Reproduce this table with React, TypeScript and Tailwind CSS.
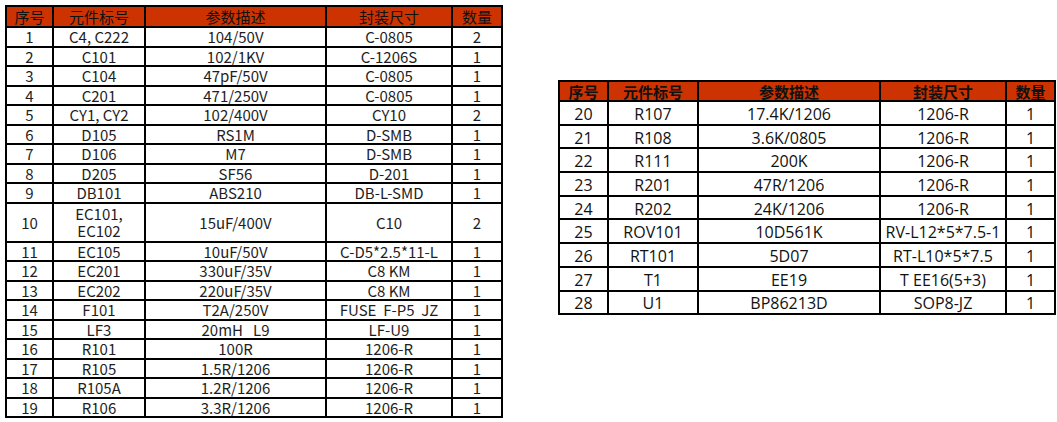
import React from "react";

type Row = [string, string, string, string, string];

const leftRows: Row[] = [
  ["1", "C4, C222", "104/50V", "C-0805", "2"],
  ["2", "C101", "102/1KV", "C-1206S", "1"],
  ["3", "C104", "47pF/50V", "C-0805", "1"],
  ["4", "C201", "471/250V", "C-0805", "1"],
  ["5", "CY1, CY2", "102/400V", "CY10", "2"],
  ["6", "D105", "RS1M", "D-SMB", "1"],
  ["7", "D106", "M7", "D-SMB", "1"],
  ["8", "D205", "SF56", "D-201", "1"],
  ["9", "DB101", "ABS210", "DB-L-SMD", "1"],
  ["10", "EC101,\nEC102", "15uF/400V", "C10", "2"],
  ["11", "EC105", "10uF/50V", "C-D5*2.5*11-L", "1"],
  ["12", "EC201", "330uF/35V", "C8 KM", "1"],
  ["13", "EC202", "220uF/35V", "C8 KM", "1"],
  ["14", "F101", "T2A/250V", "FUSE  F-P5  JZ", "1"],
  ["15", "LF3", "20mH   L9", "LF-U9", "1"],
  ["16", "R101", "100R", "1206-R", "1"],
  ["17", "R105", "1.5R/1206", "1206-R", "1"],
  ["18", "R105A", "1.2R/1206", "1206-R", "1"],
  ["19", "R106", "3.3R/1206", "1206-R", "1"],
];

const rightRows: Row[] = [
  ["20", "R107", "17.4K/1206", "1206-R", "1"],
  ["21", "R108", "3.6K/0805", "1206-R", "1"],
  ["22", "R111", "200K", "1206-R", "1"],
  ["23", "R201", "47R/1206", "1206-R", "1"],
  ["24", "R202", "24K/1206", "1206-R", "1"],
  ["25", "ROV101", "10D561K", "RV-L12*5*7.5-1", "1"],
  ["26", "RT101", "5D07", "RT-L10*5*7.5", "1"],
  ["27", "T1", "EE19", "T EE16(5+3)", "1"],
  ["28", "U1", "BP86213D", "SOP8-JZ", "1"],
];

const headers = ["序号", "元件标号", "参数描述", "封装尺寸", "数量"];

export default function App() {
  return (
    <div className="flex min-h-[422px] w-[1057px] items-start bg-white pl-[5px] pt-[5px]">
      {/* left BOM */}
      <table
        className="table-fixed border-collapse border-2 border-black text-center text-[15px] leading-[15px] text-[#1e1e24]"
        style={{ fontFamily: '"Noto Sans CJK SC", "Liberation Sans", sans-serif' }}
      >
        <colgroup>
          <col className="w-[47px]" />
          <col className="w-[92px]" />
          <col className="w-[181px]" />
          <col className="w-[126px]" />
          <col className="w-[50px]" />
        </colgroup>
        <thead>
          <tr className="h-[21px] bg-[#cc3300] text-[#111]">
            {headers.map((h) => (
              <th key={h} className="border-2 border-black p-0 font-normal leading-[15px]">
                {h}
              </th>
            ))}
          </tr>
        </thead>
        <tbody>
          {leftRows.map((r) => (
            <tr key={r[0]} className={r[0] === "10" ? "h-[39px]" : "h-[19.5px]"}>
              {r.map((c, i) => (
                <td
                  key={i}
                  className={`whitespace-pre border-2 border-black p-0 ${
                    r[0] === "10" ? "leading-[17px]" : "leading-[15px]"
                  }`}
                >
                  {c}
                </td>
              ))}
            </tr>
          ))}
        </tbody>
      </table>

      {/* right BOM */}
      <table
        className="ml-[55px] mt-[75px] table-fixed border-collapse border-2 border-black text-center text-[16px] leading-[18px] text-[#111]"
        style={{ fontFamily: '"Open Sans", "Noto Sans CJK SC", sans-serif' }}
      >
        <colgroup>
          <col className="w-[49px]" />
          <col className="w-[90px]" />
          <col className="w-[182px]" />
          <col className="w-[126px]" />
          <col className="w-[49px]" />
        </colgroup>
        <thead>
          <tr className="h-[20px] bg-[#cc3300]">
            {headers.map((h) => (
              <th
                key={h}
                className="border-2 border-black p-0 text-[15px] font-bold leading-[15px]"
                style={{ fontFamily: '"Noto Sans CJK SC", sans-serif' }}
              >
                {h}
              </th>
            ))}
          </tr>
        </thead>
        <tbody>
          {rightRows.map((r) => (
            <tr key={r[0]} className="h-[23.7px]">
              {r.map((c, i) => (
                <td key={i} className="whitespace-pre border-2 border-black p-0 pt-[2px]">
                  {c}
                </td>
              ))}
            </tr>
          ))}
        </tbody>
      </table>
    </div>
  );
}
